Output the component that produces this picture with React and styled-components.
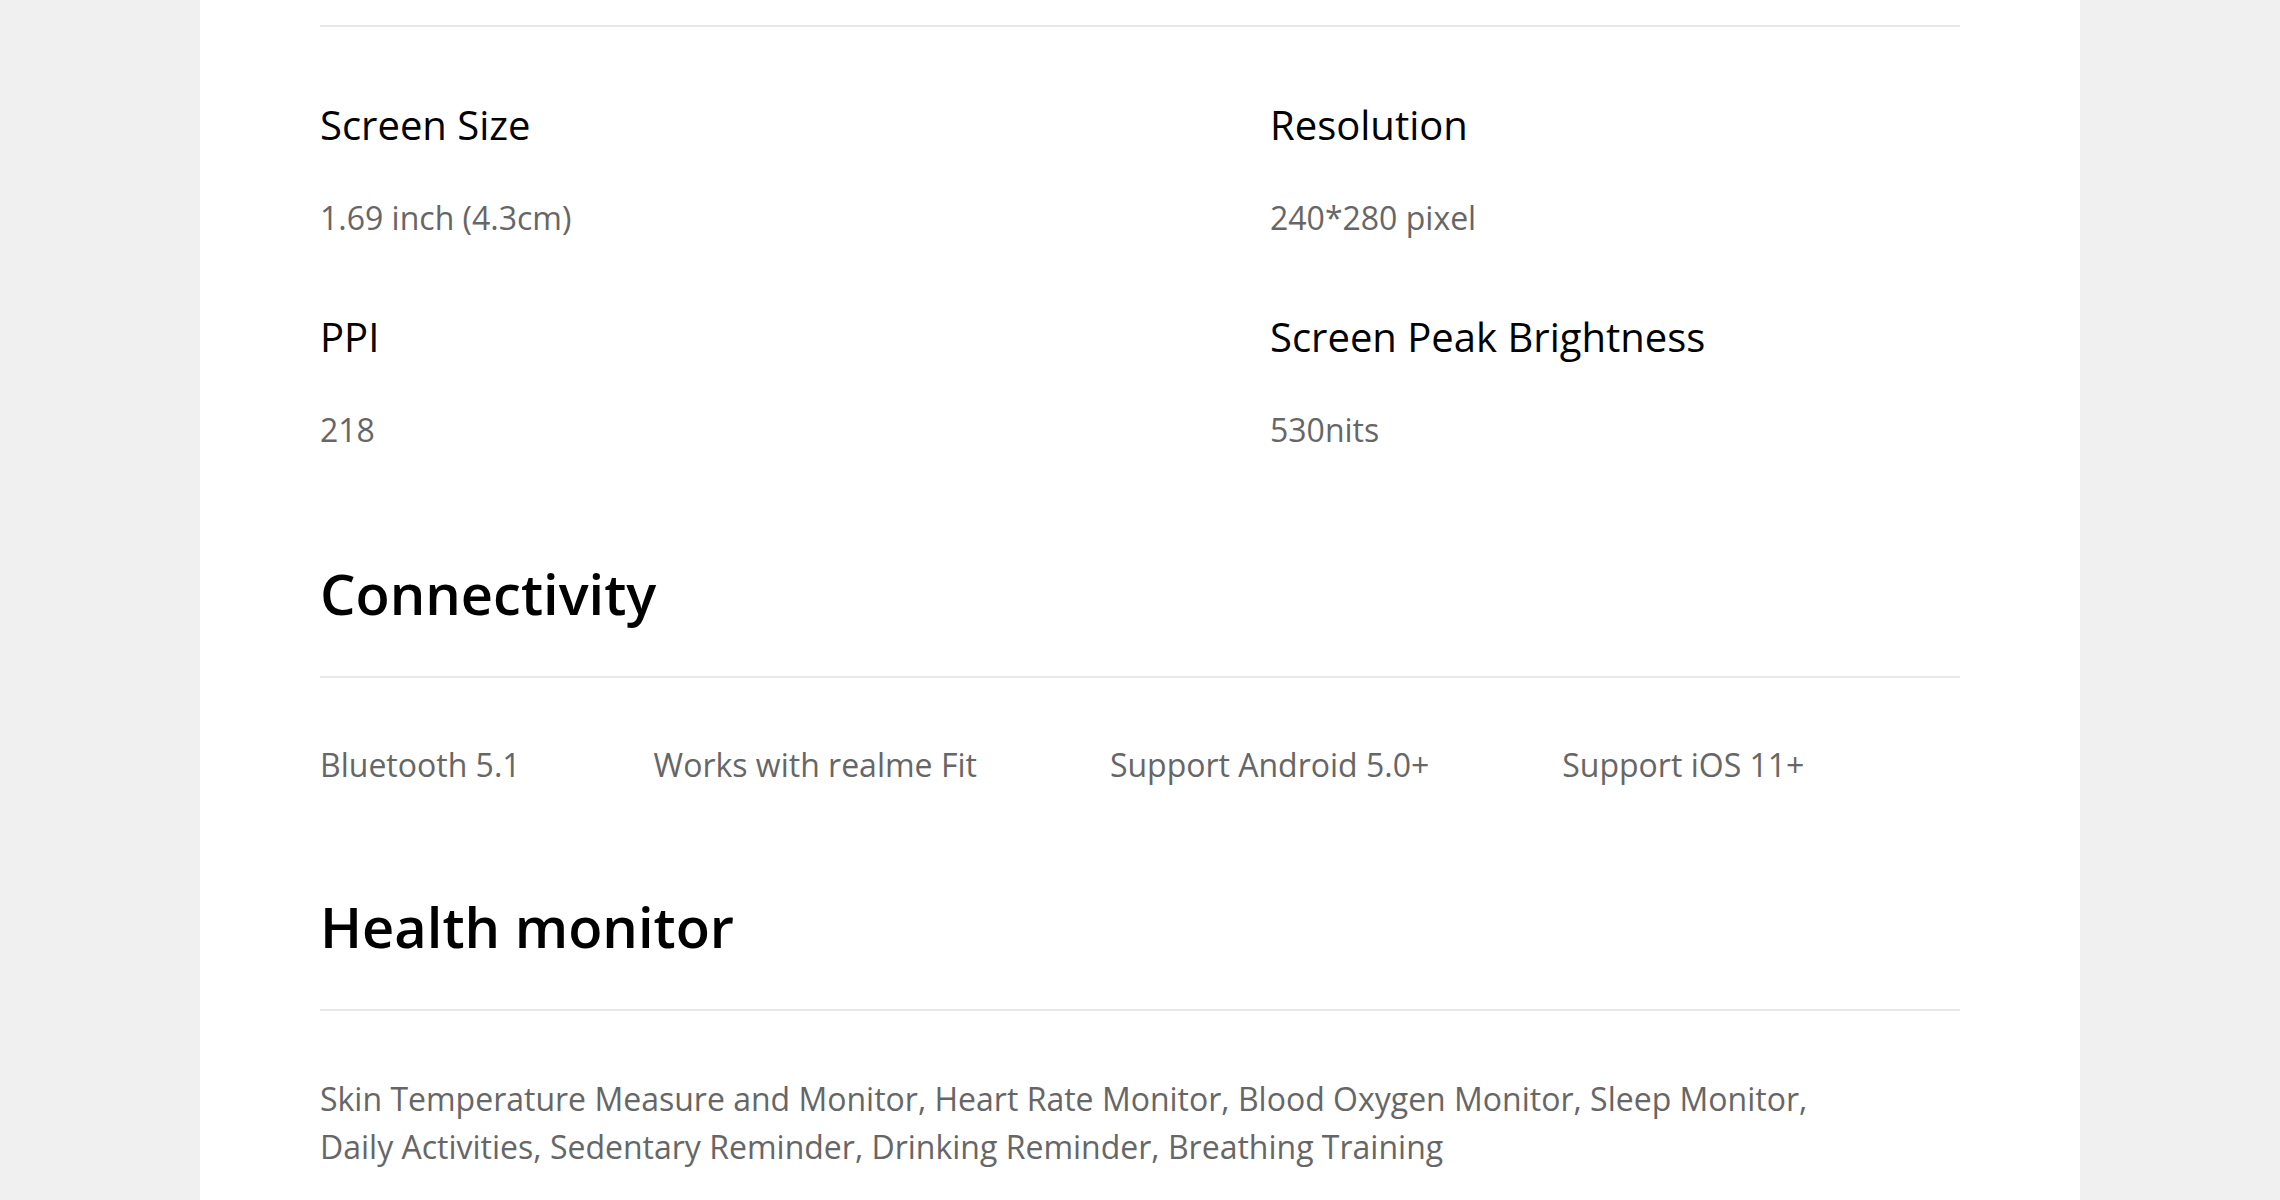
import React from 'react'
import styled, { createGlobalStyle } from 'styled-components'

const GlobalStyle = createGlobalStyle`
  html, body {
    margin: 0;
    padding: 0;
    background: #f0f0f0;
  }
  body {
    font-family: 'Open Sans', 'Noto Sans', sans-serif;
    -webkit-font-smoothing: antialiased;
  }
  * {
    box-sizing: border-box;
  }
`;

const Page = styled.div`
  width: 2280px;
  height: 1200px;
  overflow: hidden;
  padding: 0 200px;
`;

const Card = styled.main`
  background: #fff;
  min-height: 1200px;
  padding: 25px 120px 0;
`;

const Divider = styled.hr`
  margin: 0;
  border: none;
  height: 2px;
  background: #e8e8e8;
`;

const SpecGrid = styled.dl`
  display: grid;
  grid-template-columns: 950px 1fr;
  row-gap: 67px;
  margin: 70px 0 0;
`;

const SpecItem = styled.div`
  display: flex;
  flex-direction: column;
  gap: 41px;
`;

const SpecName = styled.dt`
  font-size: 40px;
  line-height: 56px;
  color: #000;
`;

const SpecValue = styled.dd`
  margin: 0;
  font-size: 32px;
  line-height: 48px;
  color: #666;
`;

const Section = styled.section`
  margin-top: ${(p) => p.$top || 101}px;
`;

const SectionTitle = styled.h2`
  margin: 0 0 45px;
  font-size: 56px;
  line-height: 76px;
  font-weight: 600;
  color: #000;
`;

const FeatureRow = styled.ul`
  display: flex;
  gap: 133px;
  list-style: none;
  margin: 63px 0 0;
  padding: 0;
  li {
    font-size: 32px;
    line-height: 48px;
    color: #666;
  }
`;

const Paragraph = styled.p`
  margin: 64px 0 0;
  max-width: 1500px;
  font-size: 32px;
  line-height: 48px;
  color: #666;
`;

const specs = [
  { name: 'Screen Size', value: '1.69 inch (4.3cm)' },
  { name: 'Resolution', value: '240*280 pixel' },
  { name: 'PPI', value: '218' },
  { name: 'Screen Peak Brightness', value: '530nits' },
]

const connectivity = ['Bluetooth 5.1', 'Works with realme Fit', 'Support Android 5.0+', 'Support iOS 11+']

const App = () => {
  return (
    <Page>
      <GlobalStyle />
      <Card>
        <Divider />
        <SpecGrid>
          {specs.map((s) =>
            <SpecItem key={s.name}>
              <SpecName>{s.name}</SpecName>
              <SpecValue>{s.value}</SpecValue>
            </SpecItem>
          )}
        </SpecGrid>

        <Section>
          <SectionTitle>Connectivity</SectionTitle>
          <Divider />
          <FeatureRow>
            {connectivity.map((c) => <li key={c}>{c}</li>)}
          </FeatureRow>
        </Section>

        <Section $top={99}>
          <SectionTitle>Health monitor</SectionTitle>
          <Divider />
          <Paragraph>
            Skin Temperature Measure and Monitor, Heart Rate Monitor, Blood Oxygen Monitor, Sleep Monitor,
            Daily Activities, Sedentary Reminder, Drinking Reminder, Breathing Training
          </Paragraph>
        </Section>
      </Card>
    </Page>
  )
}

export default App
